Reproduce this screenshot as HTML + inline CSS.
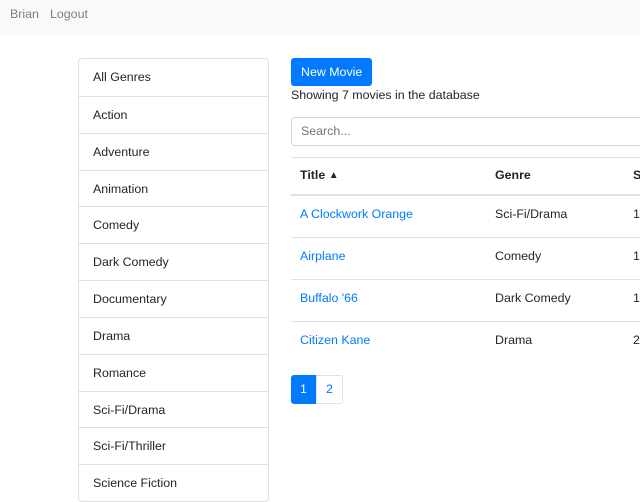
<!DOCTYPE html><html><head><style>
*{box-sizing:border-box;margin:0;padding:0}
body{width:640px;height:480px;overflow:hidden;background:#fff;font-family:"Liberation Sans",sans-serif;font-size:12.4px;color:#212529;position:relative}
.a{position:absolute}
.nav{left:0;top:0;width:640px;height:35px;background:#f8f9fa}
.nav span{position:absolute;top:7px;color:rgba(0,0,0,.5);font-size:12.4px}
.list{position:absolute;left:78px;top:58px;width:191px;border:1px solid #dfdfdf;border-radius:4px}
.li{height:36.85px;border-top:1px solid #dfdfdf;padding:11px 0 0 14px}
.li:first-child{border-top:none}
.row{position:absolute;left:291px;width:360px;border-top:1px solid #dee2e6}
.row span{position:absolute}
a{color:#007bff;text-decoration:none}
</style></head><body>
<div class="a nav"><span style="left:10px">Brian</span><span style="left:50px">Logout</span></div>
<div class="list">
<div class="li">All Genres</div>
<div class="li">Action</div>
<div class="li">Adventure</div>
<div class="li">Animation</div>
<div class="li">Comedy</div>
<div class="li">Dark Comedy</div>
<div class="li">Documentary</div>
<div class="li">Drama</div>
<div class="li">Romance</div>
<div class="li">Sci-Fi/Drama</div>
<div class="li">Sci-Fi/Thriller</div>
<div class="li">Science Fiction</div>
</div>
<div class="a" style="left:291px;top:58px;width:81px;height:28px;background:#007bff;border-radius:3px;color:#fff;padding:7px 0 0 10px">New Movie</div>
<div class="a" style="left:291px;top:88px">Showing 7 movies in the database</div>
<div class="a" style="left:291px;top:117px;width:360px;height:29px;border:1px solid #ced4da;border-radius:4px;color:#6c757d;padding:6px 0 0 9px">Search...</div>
<div class="row" style="top:157px;height:37px;font-weight:bold"><span style="left:9px;top:10px">Title <span style="position:static;font-size:10px;vertical-align:1px">▲</span></span><span style="left:204px;top:10px">Genre</span><span style="left:342px;top:10px">S</span></div>
<div class="row" style="top:194px;height:43px;border-top:2px solid #dee2e6"><span style="left:9px;top:11px"><a>A Clockwork Orange</a></span><span style="left:204px;top:11px">Sci-Fi/Drama</span><span style="left:342px;top:11px">1</span></div>
<div class="row" style="top:237px;height:42px"><span style="left:9px;top:11px"><a>Airplane</a></span><span style="left:204px;top:11px">Comedy</span><span style="left:342px;top:11px">1</span></div>
<div class="row" style="top:279px;height:42px"><span style="left:9px;top:11px"><a>Buffalo '66</a></span><span style="left:204px;top:11px">Dark Comedy</span><span style="left:342px;top:11px">1</span></div>
<div class="row" style="top:321px;height:42px"><span style="left:9px;top:11px"><a>Citizen Kane</a></span><span style="left:204px;top:11px">Drama</span><span style="left:342px;top:11px">2</span></div>
<div class="a" style="left:291px;top:375px;width:26px;height:29px;background:#007bff;color:#fff;border-radius:3px 0 0 3px;padding:7px 0 0 9px">1</div>
<div class="a" style="left:316px;top:375px;width:27px;height:29px;border:1px solid #dee2e6;color:#007bff;border-radius:0 3px 3px 0;padding:6px 0 0 9px">2</div>
</body></html>
